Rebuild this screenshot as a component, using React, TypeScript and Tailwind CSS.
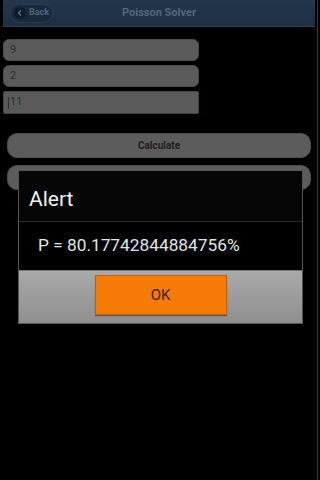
import React from "react";

export default function App() {
  return (
    <div className="relative w-[320px] h-[480px] bg-black flex overflow-hidden font-['Roboto',sans-serif]">
      <div className="flex-1 flex flex-col pl-[3px] pr-[1px]">
        <div className="h-[27px] bg-gradient-to-b from-[#24384e] to-[#1c2e42] flex items-center relative border-b border-[#2c3e52]">
          <div className="ml-[7px] h-[19px] w-[43px] rounded-full bg-[#192a3c] border border-[#2a3c50] flex items-center pl-[3px] gap-[3px]">
            <span className="w-[12px] h-[12px] rounded-full bg-[#0f1c2a] flex items-center justify-center">
              <svg width="8" height="8" viewBox="0 0 8 8">
                <path d="M5 1.5 L2.5 4 L5 6.5" stroke="#5a6b7d" strokeWidth="1.6" fill="none" />
              </svg>
            </span>
            <span className="text-[9px] font-bold text-[#52647a]">Back</span>
          </div>
          <div className="absolute inset-0 flex items-center justify-center text-[11px] font-bold text-[#55677b]">
            Poisson Solver
          </div>
        </div>

        <div className="mt-[12px] w-[196px] flex flex-col gap-[4px]">
          <div className="h-[22px] rounded-[6px] bg-[#5a5a5a] border border-[#4a4a4a] flex items-center pl-[6px] text-[11px] text-[#2e2e2e]">9</div>
          <div className="h-[22px] rounded-[6px] bg-[#5a5a5a] border border-[#4a4a4a] flex items-center pl-[6px] text-[11px] text-[#2e2e2e]">2</div>
          <div className="h-[23px] rounded-[2px] bg-[#5a5a5a] border border-[#3e4a4a] flex items-center pl-[4px] text-[11px] text-[#2e2e2e]">
            <span className="w-[1px] h-[12px] bg-[#2e2e2e] mr-[1px]" />11
          </div>
        </div>

        <div className="mt-[19px] px-[4px] flex flex-col gap-[7px]">
          <div className="h-[25px] rounded-[10px] bg-[#5c5c5c] border border-[#4e4e4e] flex items-center justify-center text-[10px] font-bold text-[#1e1e1e]">
            Calculate
          </div>
          <div className="h-[25px] rounded-[10px] bg-[#5c5c5c] border border-[#4e4e4e] flex items-center justify-center text-[10px] font-bold text-[#1e1e1e]">
            Reset
          </div>
        </div>
      </div>
      <div className="w-[4px] flex">
        <div className="w-[1px] ml-[1px] bg-[#3a3a3a]" />
      </div>

      <div className="absolute left-[18px] top-[170px] w-[285px] h-[154px] border border-[#555] bg-black flex flex-col">
        <div className="h-[51px] bg-[#060606] border-b border-[#2a2a2a] flex items-end pb-[6px] pl-[10px] text-[21px] text-[#f2f2f2]">
          Alert
        </div>
        <div className="h-[48px] flex items-center pl-[19px] text-[17.3px] text-[#e4e4e4]">
          P = 80.17742844884756%
        </div>
        <div className="flex-1 bg-gradient-to-b from-[#a9a9a9] to-[#8f8f8f] border-t border-[#777] flex justify-center pt-[4px]">
          <div className="w-[132px] h-[40px] bg-[#f57a06] border border-[#c86000] shadow-[0_1px_1px_rgba(0,0,0,0.4)] flex items-center justify-center text-[15px] text-[#3a2000]">
            OK
          </div>
        </div>
      </div>
    </div>
  );
}
